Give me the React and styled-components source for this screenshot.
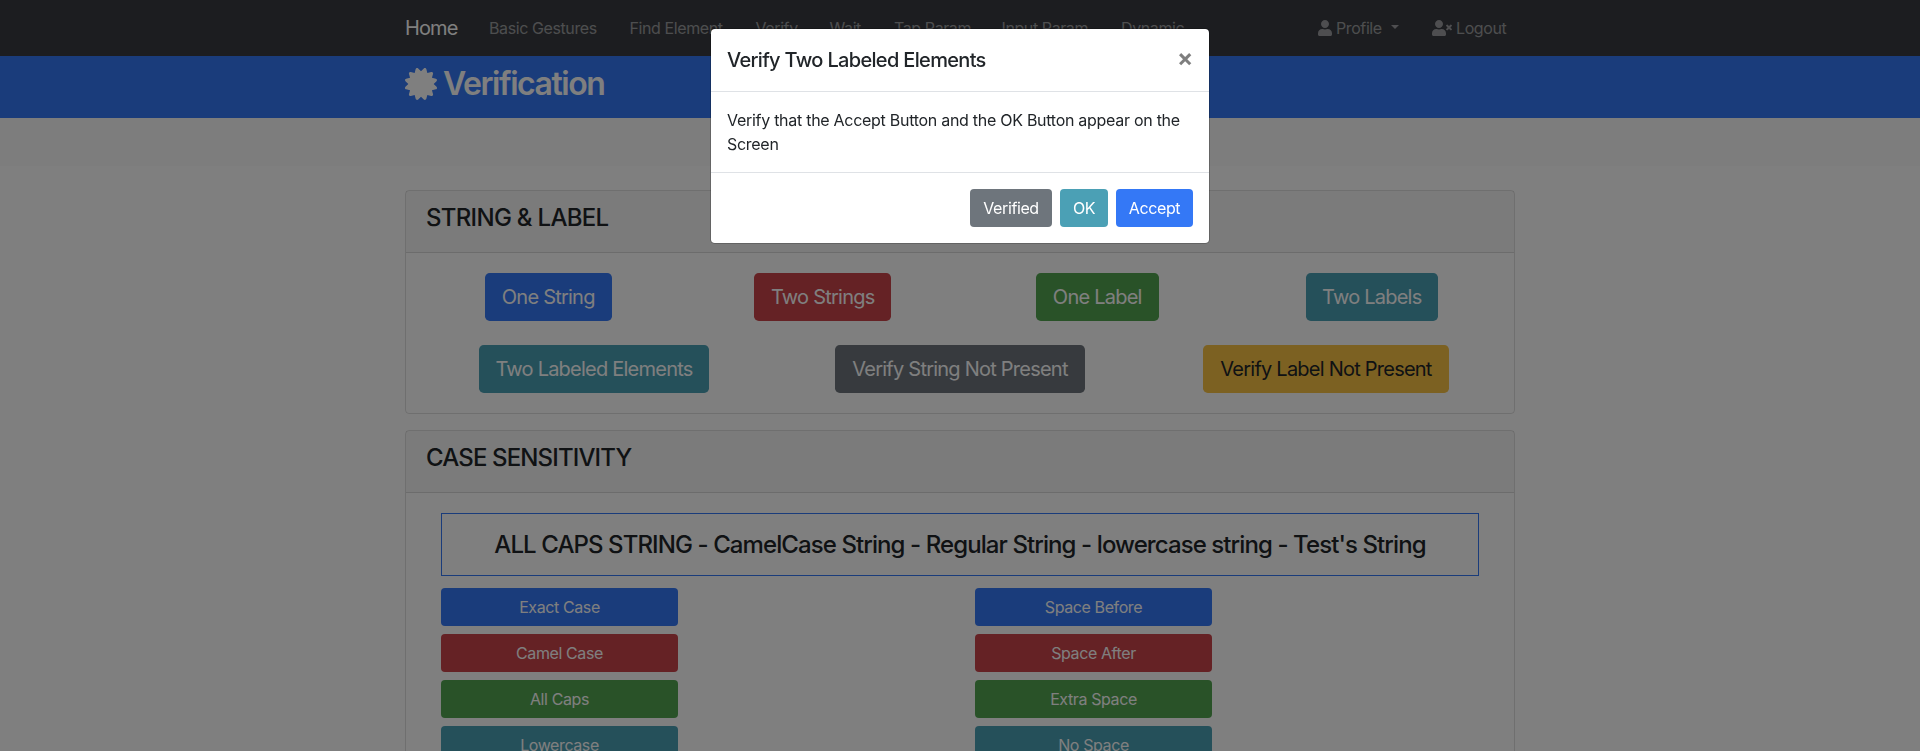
import React from "react";
import styled, { createGlobalStyle } from "styled-components";
import { FaCertificate, FaUser, FaUserTimes } from "react-icons/fa";

const colors = {
  primary: "#3478f6",
  secondary: "#6e757c",
  success: "#53a551",
  danger: "#cb444a",
  warning: "#f8c244",
  info: "#4ba0b5",
};

const GlobalStyle = createGlobalStyle`
  *, *::before, *::after { box-sizing: border-box; }
  body {
    margin: 0;
    overflow: hidden;
    font-family: Inter, "Liberation Sans", sans-serif;
    font-size: 16px;
    line-height: 1.5;
    color: #212529;
    background: #fff;
  }
`;

const Page = styled.div`
  height: 751px;
  overflow: hidden;
`;

const Container = styled.div`
  width: 1110px;
  margin: 0 auto;
`;

const Navbar = styled.nav`
  height: 56px;
  background: #383a40;
`;

const NavInner = styled(Container)`
  display: flex;
  align-items: center;
  height: 100%;
`;

const Brand = styled.a`
  width: 84px;
  font-size: 20px;
  line-height: 30px;
  letter-spacing: -0.9px;
  color: #fff;
`;

const NavLink = styled.a`
  width: ${(p) => p.$width}px;
  white-space: nowrap;
  letter-spacing: -0.4px;
  color: rgba(255, 255, 255, 0.5);
`;

const NavRight = styled.div`
  display: flex;
  margin-left: auto;
`;

const IconLink = styled.a`
  display: flex;
  align-items: center;
  gap: 4px;
  width: ${(p) => p.$width}px;
  white-space: nowrap;
  letter-spacing: -0.4px;
  color: rgba(255, 255, 255, 0.5);
`;

const UserIcon = styled(FaUser)`
  width: 14px;
  height: 16px;
`;

const LogoutIcon = styled(FaUserTimes)`
  width: 20px;
  height: 16px;
`;

const Caret = styled.span`
  margin: -3px 0 0 5px;
  border-top: 4.8px solid;
  border-left: 4.8px solid transparent;
  border-right: 4.8px solid transparent;
`;

const Banner = styled.header`
  height: 62px;
  background: ${colors.primary};
  color: #fff;
`;

const BannerTitle = styled.h1`
  display: flex;
  align-items: center;
  gap: 6px;
  margin: 0;
  padding-top: 9px;
  font-size: 32px;
  font-weight: 600;
  line-height: 38.4px;
  letter-spacing: -1.45px;

  svg { margin-bottom: 1px; }
`;

const Strip = styled.div`
  height: 48px;
  margin-bottom: 24px;
  background: #fafafa;
`;

const Card = styled.section`
  margin-bottom: 16px;
  border: 1px solid rgba(0, 0, 0, 0.125);
  border-radius: 4px;
`;

const CardHeader = styled.div`
  height: 62px;
  padding: 12px 20px;
  background: rgba(0, 0, 0, 0.03);
  border-bottom: 1px solid rgba(0, 0, 0, 0.125);
`;

const CardTitle = styled.h4`
  margin: 0;
  font-size: 24px;
  font-weight: 500;
  line-height: 29px;
  letter-spacing: ${(p) => p.$spacing}px;
`;

const CardBody = styled.div`
  padding: 20px 5px;
`;

const ButtonRow = styled.div`
  display: grid;
  grid-template-columns: repeat(${(p) => p.$columns}, 1fr);
  justify-items: center;

  & + & { margin-top: 24px; }
`;

const Button = styled.button`
  width: ${(p) => (p.$width ? `${p.$width}px` : "100%")};
  height: 38px;
  padding: 0;
  border: 0;
  border-radius: 4px;
  font-family: inherit;
  font-size: 16px;
  line-height: 24px;
  letter-spacing: -0.4px;
  white-space: nowrap;
  color: ${(p) => (p.$tone === "warning" ? "#212529" : "#fff")};
  background: ${(p) => colors[p.$tone]};
`;

const LargeButton = styled(Button)`
  height: 48px;
  border-radius: 4.8px;
  font-size: 20px;
  line-height: 30px;
  letter-spacing: -0.77px;
`;

const CaseSection = styled.div`
  padding: 0 30px;
`;

const SampleText = styled.h4`
  display: flex;
  align-items: center;
  justify-content: center;
  height: 63px;
  margin: 0 0 12px;
  border: 1px solid ${colors.primary};
  font-size: 24px;
  font-weight: 500;
  letter-spacing: -0.91px;
  white-space: nowrap;
`;

const CaseGrid = styled.div`
  display: grid;
  grid-template-columns: 237px 237px;
  column-gap: 297px;
  row-gap: 8px;
`;

const Backdrop = styled.div`
  position: fixed;
  inset: 0;
  padding-top: 28px;
  background: rgba(0, 0, 0, 0.5);
`;

const Modal = styled.div`
  width: 500px;
  margin: 0 auto;
  background: #fff;
  background-clip: padding-box;
  border: 1px solid rgba(0, 0, 0, 0.2);
  border-radius: 4.8px;
`;

const ModalHeader = styled.div`
  display: flex;
  justify-content: space-between;
  height: 63px;
  padding: 16px;
  border-bottom: 1px solid #dfe2e6;
`;

const ModalTitle = styled.h5`
  margin: 0;
  font-size: 20px;
  font-weight: 500;
  line-height: 30px;
  letter-spacing: -0.67px;
`;

const CloseButton = styled.button`
  width: 16px;
  height: 26px;
  padding: 0;
  border: 0;
  background: none;
  font: 700 24px/26px Inter, sans-serif;
  color: #000;
  opacity: 0.5;
`;

const ModalBody = styled.div`
  padding: 16px;
  letter-spacing: -0.28px;
`;

const ModalFooter = styled.div`
  display: flex;
  justify-content: flex-end;
  gap: 8px;
  padding: 16px;
  border-top: 1px solid #dfe2e6;
`;

const navLinks = [
  ["Basic Gestures", 140.5],
  ["Find Element", 126],
  ["Verify", 74],
  ["Wait", 64.5],
  ["Tap Param", 107.5],
  ["Input Param", 119.5],
  ["Dynamic", 64],
];

const stringButtons = [
  ["One String", "primary", 127],
  ["Two Strings", "danger", 137],
  ["One Label", "success", 123],
  ["Two Labels", "info", 132],
];

const labelButtons = [
  ["Two Labeled Elements", "info", 230],
  ["Verify String Not Present", "secondary", 250],
  ["Verify Label Not Present", "warning", 246],
];

const caseButtons = [
  ["Exact Case", "primary"],
  ["Space Before", "primary"],
  ["Camel Case", "danger"],
  ["Space After", "danger"],
  ["All Caps", "success"],
  ["Extra Space", "success"],
  ["Lowercase", "info"],
  ["No Space", "info"],
];

const modalButtons = [
  ["Verified", "secondary", 82],
  ["OK", "info", 48],
  ["Accept", "primary", 77],
];

const renderLarge = ([label, tone, width]) => (
  <LargeButton key={label} $tone={tone} $width={width}>{label}</LargeButton>
);

export default function App() {
  return (
    <>
      <GlobalStyle />
      <Page>
        <Navbar>
          <NavInner>
            <Brand>Home</Brand>
            {navLinks.map(([label, width]) => (
              <NavLink key={label} $width={width}>{label}</NavLink>
            ))}
            <NavRight>
              <IconLink $width={114}>
                <UserIcon />
                Profile
                <Caret />
              </IconLink>
              <IconLink $width={83}>
                <LogoutIcon />
                Logout
              </IconLink>
            </NavRight>
          </NavInner>
        </Navbar>
        <Banner>
          <Container>
            <BannerTitle>
              <FaCertificate size={32} />
              Verification
            </BannerTitle>
          </Container>
        </Banner>
        <Strip />
        <Container>
          <Card>
            <CardHeader>
              <CardTitle $spacing={-0.7}>STRING &amp; LABEL</CardTitle>
            </CardHeader>
            <CardBody>
              <ButtonRow $columns={4}>{stringButtons.map(renderLarge)}</ButtonRow>
              <ButtonRow $columns={3}>{labelButtons.map(renderLarge)}</ButtonRow>
            </CardBody>
          </Card>
          <Card>
            <CardHeader>
              <CardTitle $spacing={-0.86}>CASE SENSITIVITY</CardTitle>
            </CardHeader>
            <CardBody>
              <CaseSection>
                <SampleText>
                  ALL CAPS STRING - CamelCase String - Regular String - lowercase string - Test's String
                </SampleText>
                <CaseGrid>
                  {caseButtons.map(([label, tone]) => (
                    <Button key={label} $tone={tone}>{label}</Button>
                  ))}
                </CaseGrid>
              </CaseSection>
            </CardBody>
          </Card>
        </Container>
      </Page>
      <Backdrop>
        <Modal role="dialog">
          <ModalHeader>
            <ModalTitle>Verify Two Labeled Elements</ModalTitle>
            <CloseButton aria-label="Close">×</CloseButton>
          </ModalHeader>
          <ModalBody>
            Verify that the Accept Button and the OK Button appear on the Screen
          </ModalBody>
          <ModalFooter>
            {modalButtons.map(([label, tone, width]) => (
              <Button key={label} $tone={tone} $width={width}>{label}</Button>
            ))}
          </ModalFooter>
        </Modal>
      </Backdrop>
    </>
  );
}
